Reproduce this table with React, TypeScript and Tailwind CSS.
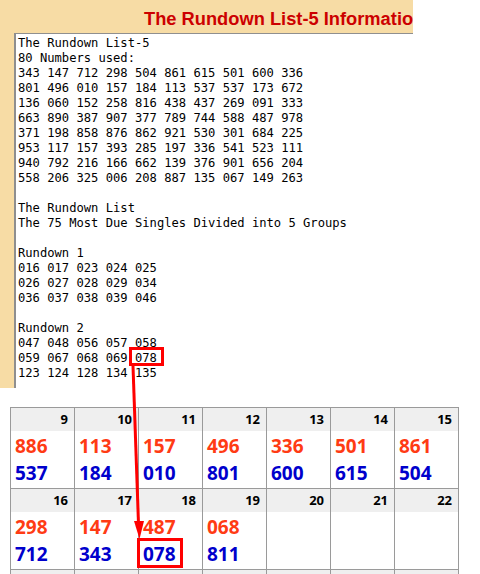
import React from "react"

const listLines = [
  "The Rundown List-5",
  "80 Numbers used:",
  "343 147 712 298 504 861 615 501 600 336",
  "801 496 010 157 184 113 537 537 173 672",
  "136 060 152 258 816 438 437 269 091 333",
  "663 890 387 907 377 789 744 588 487 978",
  "371 198 858 876 862 921 530 301 684 225",
  "953 117 157 393 285 197 336 541 523 111",
  "940 792 216 166 662 139 376 901 656 204",
  "558 206 325 006 208 887 135 067 149 263",
  "",
  "The Rundown List",
  "The 75 Most Due Singles Divided into 5 Groups",
  "",
  "Rundown 1",
  "016 017 023 024 025",
  "026 027 028 029 034",
  "036 037 038 039 046",
  "",
  "Rundown 2",
  "047 048 056 057 058",
  "MARK",
  "123 124 128 134 135",
]

type Day = { key: number; day?: number; red?: string; blue?: string; boxed?: boolean }

// third week only shows its grey header strip at the bottom edge
const weeks: Day[][] = [
  [
    { key: 9, day: 9, red: "886", blue: "537" },
    { key: 10, day: 10, red: "113", blue: "184" },
    { key: 11, day: 11, red: "157", blue: "010" },
    { key: 12, day: 12, red: "496", blue: "801" },
    { key: 13, day: 13, red: "336", blue: "600" },
    { key: 14, day: 14, red: "501", blue: "615" },
    { key: 15, day: 15, red: "861", blue: "504" },
  ],
  [
    { key: 16, day: 16, red: "298", blue: "712" },
    { key: 17, day: 17, red: "147", blue: "343" },
    { key: 18, day: 18, red: "487", blue: "078", boxed: true },
    { key: 19, day: 19, red: "068", blue: "811" },
    { key: 20, day: 20 },
    { key: 21, day: 21 },
    { key: 22, day: 22 },
  ],
  [{ key: 23 }, { key: 24 }, { key: 25 }, { key: 26 }, { key: 27 }, { key: 28 }, { key: 29 }],
]

function DayCell({ d }: { d: Day }) {
  return (
    <div className="h-[81px] border-r border-b border-[#9a9a9a]">
      <div className="h-[23px] bg-[#efefef] pr-[6px] text-right text-[13px] font-bold leading-[23px] text-black">
        {d.day}
      </div>
      <div className="pl-[4px] pt-[2px] text-[19px] font-bold leading-[27px]">
        <div className="h-[27px] text-[#ff3b14]">{d.red}</div>
        <div className="h-[27px] text-[#0000cc]">
          {d.boxed ? (
            <span className="relative">
              {d.blue}
              <span className="absolute -left-[6px] -right-[7px] -top-[3px] -bottom-[1px] border-[3px] border-[#f00]" />
            </span>
          ) : (
            d.blue
          )}
        </div>
      </div>
    </div>
  )
}

export default function App() {
  return (
    <div className="relative h-[574px] w-[480px] overflow-hidden bg-white">
      {/* info panel */}
      <div className="w-[413px] overflow-hidden bg-[#f7dca5]">
        <div
          className="h-[33px] whitespace-nowrap pl-[144px] pt-[8px] text-[18.3px] font-bold leading-[22px] text-[#cc0000]"
          style={{ fontFamily: '"Liberation Sans", Arial, sans-serif' }}
        >
          The Rundown List-5 Information
        </div>
        <div className="pl-[14px]">
          <pre
            className="h-[355px] border-t border-l-2 border-[#8f8f8f] bg-white pl-[2px] pt-[2px] text-[12.15px] leading-[15px] text-black"
            style={{ fontFamily: '"DejaVu Sans Mono", monospace' }}
          >
            {listLines.map((line, i) =>
              line === "MARK" ? (
                <div key={i} className="h-[15px]">
                  059 067 068 069{" "}
                  <span className="relative">
                    078
                    <span className="absolute -left-[6px] -right-[7px] -top-[4px] -bottom-[1px] border-[3px] border-[#f00]" />
                  </span>
                </div>
              ) : (
                <div key={i} className="h-[15px]">
                  {line}
                </div>
              )
            )}
          </pre>
        </div>
      </div>

      {/* calendar */}
      <div
        className="ml-[10px] mt-[19px] grid w-[449px] grid-cols-[repeat(7,64px)] border-t border-l border-[#9a9a9a]"
        style={{ fontFamily: '"Open Sans", sans-serif' }}
      >
        {weeks.flat().map((d) => (
          <DayCell key={d.key} d={d} />
        ))}
      </div>

      {/* arrow */}
      <svg className="pointer-events-none absolute left-0 top-0" width="480" height="574">
        <line x1="133" y1="366" x2="138.5" y2="524" stroke="#f00" strokeWidth="3" />
        <polygon points="134,521 144,521 139.5,539" fill="#f00" />
      </svg>
    </div>
  )
}
